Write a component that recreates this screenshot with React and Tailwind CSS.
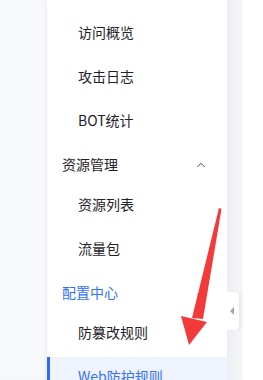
import { ChevronUp } from 'lucide-react'

const font = { fontFamily: '"Noto Sans CJK SC", "Noto Sans", sans-serif' }

function SubItem({ label, active, first }) {
  return (
    <div
      className={`relative h-[40px] flex items-center pl-[31px] text-[14px] ${first ? '' : 'mt-1'} ${
        active ? 'bg-[#eef3fe] text-[#3370ff]' : 'text-[#1f2329]'
      }`}
    >
      {active && <span className="absolute left-0 top-0 bottom-0 w-[3px] bg-[#2f6bf5]" />}
      <span className="-mt-[2px]">{label}</span>
    </div>
  )
}

function Group({ label, active }) {
  return (
    <div
      className={`mt-1 h-[40px] flex items-center justify-between pl-[15px] pr-[19px] text-[14px] ${
        active ? 'text-[#3370ff]' : 'text-[#1f2329]'
      }`}
    >
      <span className="-mt-[2px]">{label}</span>
      <ChevronUp size={14} strokeWidth={1.6} className={active ? 'text-[#3370ff]' : 'text-[#3d4450]'} />
    </div>
  )
}

export default function App() {
  return (
    <div className="relative w-[263px] h-[380px] overflow-hidden bg-white flex" style={font}>
      {/* left page background */}
      <div className="w-[47px] shrink-0 bg-[#f7f8fa] shadow-[inset_-3px_0_4px_-2px_rgba(0,0,0,0.06)]" />

      {/* sidebar menu */}
      <div className="w-[180px] shrink-0 bg-white pt-[9px]">
        <SubItem label="访问概览" />
        <SubItem label="攻击日志" />
        <SubItem label="BOT统计" />
        <Group label="资源管理" />
        <SubItem label="资源列表" first />
        <SubItem label="流量包" />
        <Group label="配置中心" active />
        <SubItem label="防篡改规则" first />
        <SubItem label="Web防护规则" active />
      </div>

      {/* right gutter */}
      <div className="w-[16px] shrink-0 bg-gradient-to-r from-[#eceef2] to-[#f6f7f9]" />
      <div className="flex-1 bg-white" />

      {/* collapse tab */}
      <div className="absolute left-[227px] top-[292px] w-[12px] h-[38px] bg-white rounded-r-[4px] shadow-[2px_0_3px_rgba(0,0,0,0.06)] flex items-center justify-start pl-[3px]">
        <span className="w-0 h-0 border-y-[4px] border-y-transparent border-r-[4px] border-r-[#a0a4ab]" />
      </div>

      {/* red annotation arrow */}
      <svg className="absolute left-0 top-0 pointer-events-none" width="263" height="380" viewBox="0 0 263 380">
        <polygon points="219,208 221.5,209 203,319 192,318" fill="#f33a3a" />
        <polygon points="181,316 207,322 189,345" fill="#f33a3a" />
      </svg>
    </div>
  )
}
